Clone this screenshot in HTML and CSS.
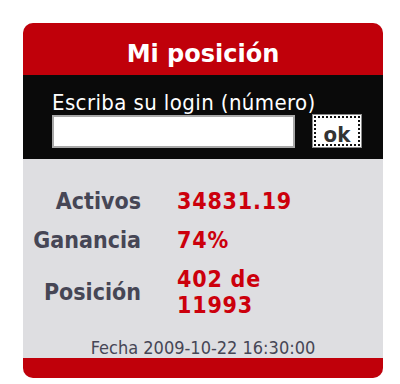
FILE: index.html
```html
<!DOCTYPE html>
<html lang="es">
<head>
    <meta charset="UTF-8">
    <title>Mi posición</title>
    <link rel="stylesheet" href="styles.css">
</head>
<body>
    <div class="box">
        <div class="box-title">Mi posición</div>

        <form class="login">
            <label class="login-label" for="login">Escriba su login (número)</label>
            <div class="login-row">
                <input type="text" id="login" class="login-input">
                <button type="button" class="login-button">ok</button>
            </div>
        </form>

        <div class="stats">
            <dl class="stats-list">
                <dt class="stat-label">Activos</dt>
                <dd class="stat-value">34831.19</dd>
                <dt class="stat-label">Ganancia</dt>
                <dd class="stat-value">74%</dd>
                <dt class="stat-label">Posición</dt>
                <dd class="stat-value">402 de<br>11993</dd>
            </dl>
            <p class="date">Fecha 2009-10-22 16:30:00</p>
        </div>

        <div class="box-footer"></div>
    </div>
</body>
</html>
```

FILE: styles.css
```css
* {
    margin: 0;
    padding: 0;
    box-sizing: border-box;
}

body {
    background-color: #fff;
    padding: 23px 17px 0 23px;
    font-family: "DejaVu Sans", Verdana, sans-serif;
}

.box {
    width: 360px;
    border-radius: 10px;
    overflow: hidden;
    background-color: #dedee1;
}

.box-title {
    background-color: #c0000a;
    color: #fff;
    font-weight: bold;
    font-size: 24px;
    text-align: center;
    height: 52px;
    padding-top: 10px;
    line-height: 42px;
}

.login {
    background-color: #0a0a0a;
    height: 84px;
    padding: 16px 0 0 29px;
}

.login-label {
    display: block;
    color: #fff;
    font-family: "DejaVu Sans Condensed", "DejaVu Sans", sans-serif;
    font-size: 22px;
    line-height: 23px;
    letter-spacing: 0.4px;
}

.login-row {
    display: flex;
    align-items: center;
    gap: 17px;
}

.login-input {
    width: 243px;
    height: 33px;
    border: 2px solid #a8a8a8;
    background-color: #fff;
}

.login-button {
    width: 50px;
    height: 34px;
    background-color: #fff;
    border: 1px solid #8a8a8a;
    outline: 2px dotted #111;
    outline-offset: -4px;
    color: #333;
    font-family: "DejaVu Sans Condensed", "DejaVu Sans", sans-serif;
    font-weight: bold;
    font-size: 22px;
    line-height: 22px;
    padding-top: 8px;
}

.stats {
    padding-top: 22px;
    height: 199px;
}

.stats-list {
    display: grid;
    grid-template-columns: 118px auto;
    grid-template-rows: 39px 39px 65px;
    column-gap: 36px;
    align-items: center;
    font-family: "DejaVu Sans Condensed", "DejaVu Sans", sans-serif;
    font-weight: bold;
    font-size: 23px;
}

.stat-label {
    color: #464655;
    text-align: right;
}

.stat-value {
    color: #cc000c;
    line-height: 26px;
    letter-spacing: 0.8px;
}

.date {
    margin-top: 15px;
    text-align: center;
    color: #464655;
    font-family: "DejaVu Sans Condensed", "DejaVu Sans", sans-serif;
    font-size: 18px;
    line-height: 18px;
}

.box-footer {
    background-color: #c0000a;
    height: 20px;
}
```
